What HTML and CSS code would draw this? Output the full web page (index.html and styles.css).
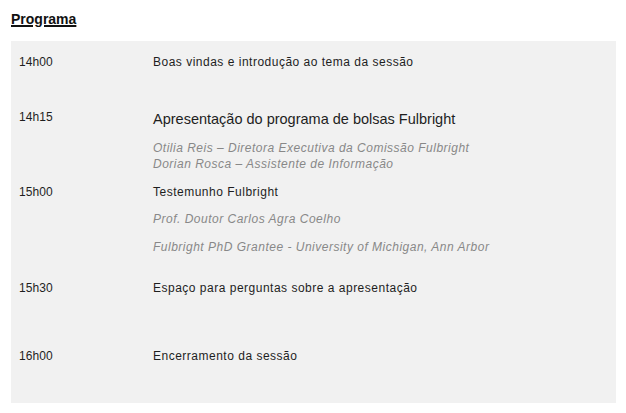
FILE: index.html
```html
<!DOCTYPE html>
<html lang="pt">
<head>
<meta charset="utf-8">
<title>Programa</title>
<link rel="stylesheet" href="styles.css">
</head>
<body>
<div class="page">
  <h2 class="title">Programa</h2>
  <div class="schedule">
    <div class="row row-1">
      <div class="time">14h00</div>
      <div class="content">
        <p class="item">Boas vindas e introdução ao tema da sessão</p>
      </div>
    </div>
    <div class="row row-2">
      <div class="time">14h15</div>
      <div class="content">
        <p class="item big">Apresentação do programa de bolsas Fulbright</p>
        <p class="speaker">Otilia Reis – Diretora Executiva da Comissão Fulbright<br>Dorian Rosca – Assistente de Informação</p>
      </div>
    </div>
    <div class="row row-3">
      <div class="time">15h00</div>
      <div class="content">
        <p class="item gap-13">Testemunho Fulbright</p>
        <p class="speaker single gap-14">Prof. Doutor Carlos Agra Coelho</p>
        <p class="speaker single">Fulbright PhD Grantee - University of Michigan, Ann Arbor</p>
      </div>
    </div>
    <div class="row row-4">
      <div class="time">15h30</div>
      <div class="content">
        <p class="item">Espaço para perguntas sobre a apresentação</p>
      </div>
    </div>
    <div class="row row-5">
      <div class="time">16h00</div>
      <div class="content">
        <p class="item">Encerramento da sessão</p>
      </div>
    </div>
  </div>
</div>
</body>
</html>
```
FILE: styles.css
```css
html, body {
  margin: 0;
  padding: 0;
  background: #ffffff;
}

body {
  font-family: "Liberation Sans", Arial, sans-serif;
  color: #1e1e1e;
}

.page {
  padding: 11px 10px 0 11px;
}

.title {
  margin: 0 0 14px 0;
  font-size: 14px;
  line-height: 16px;
  font-weight: bold;
  color: #111111;
  text-decoration: underline;
  text-decoration-thickness: 2px;
  text-underline-offset: 1px;
}

.schedule {
  background: #f1f1f1;
  padding: 14px 0 0 0;
}

.row {
  display: flex;
  align-items: flex-start;
}

.time {
  width: 134px;
  padding-left: 8px;
  flex: none;
  font-size: 12px;
  line-height: 14px;
  letter-spacing: 0.1px;
}

.content {
  flex: 1;
}

.item {
  margin: 0;
  font-size: 12px;
  line-height: 14px;
  letter-spacing: 0.5px;
}

.big {
  font-size: 14.5px;
  line-height: 18px;
  letter-spacing: 0;
  margin-bottom: 12px;
}

.speaker {
  margin: 0;
  font-size: 12px;
  line-height: 16px;
  font-style: italic;
  color: #888888;
  letter-spacing: 0.5px;
}

.speaker.single {
  line-height: 14px;
}

.gap-13 { margin-bottom: 13px; }
.gap-14 { margin-bottom: 14px; }

.row-1 { padding-bottom: 41px; }
.row-2 { padding-bottom: 13px; }
.row-3 { padding-bottom: 27px; }
.row-4 { padding-bottom: 54px; }
.row-5 { padding-bottom: 40px; }
```
